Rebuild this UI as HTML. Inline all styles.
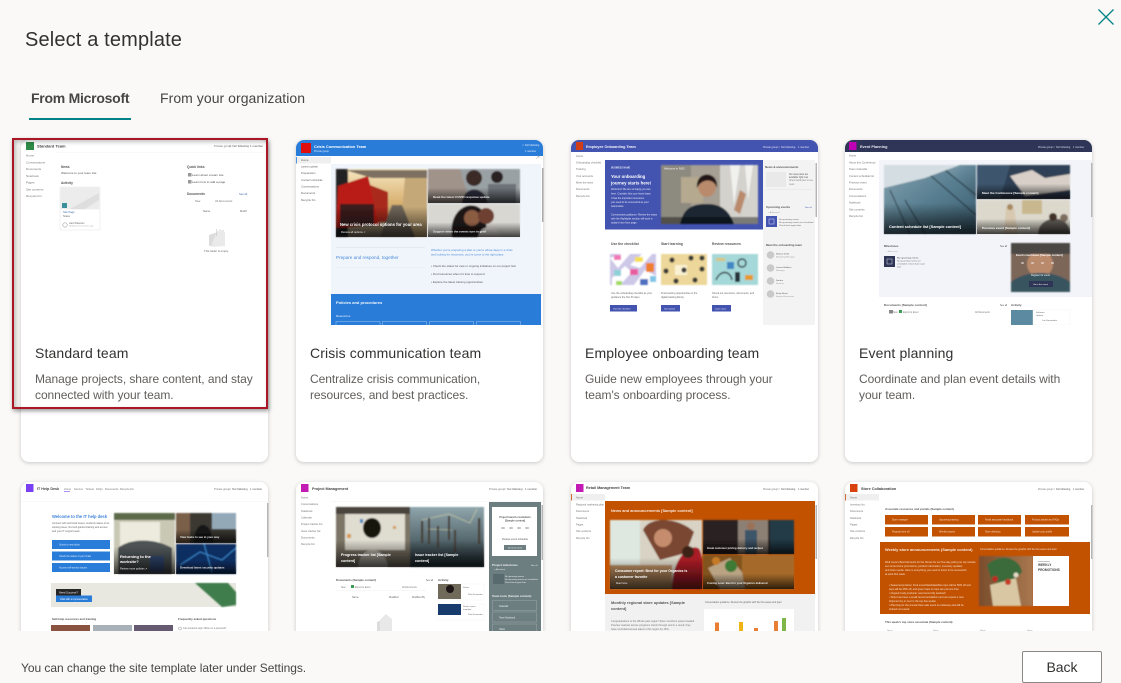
<!DOCTYPE html>
<html><head><meta charset="utf-8"><title>Select a template</title>
<style>
html,body{margin:0;padding:0;width:1121px;height:683px;overflow:hidden;background:#faf9f8;font-family:"Liberation Sans",sans-serif}
.a{position:absolute;white-space:nowrap}
.card{position:absolute;width:247px;background:#fff;border-radius:8px;box-shadow:0 1px 4px rgba(0,0,0,.2)}
.t{position:absolute;font-size:14px;color:#323130;letter-spacing:.13px;white-space:nowrap}
.d{position:absolute;font-size:12px;line-height:16px;color:#605e5c;letter-spacing:-.06px;white-space:nowrap}
svg text{font-family:"Liberation Sans",sans-serif}
</style></head>
<body>
<div class="a" style="left:25px;top:28px;font-size:20px;line-height:24px;color:#323130;letter-spacing:.15px">Select a template</div>
<div class="a" style="left:31px;top:90px;font-size:14px;line-height:17px;font-weight:bold;color:#484644;letter-spacing:-.26px">From Microsoft</div>
<div class="a" style="left:160px;top:90px;font-size:14px;line-height:17px;color:#484644;letter-spacing:.05px">From your organization</div>
<div class="a" style="left:29px;top:118px;width:102px;height:2px;background:#038387"></div>
<svg class="a" style="left:1097px;top:8px" width="18" height="18" viewBox="0 0 18 18"><path d="M1.5 1.5L16.500 16.500M16.500 1.500L1.500 16.500" stroke="#038387" stroke-width="1.3" fill="none"/></svg>

<div class="card" style="left:21px;top:140px;height:322px"></div>
<div class="card" style="left:296px;top:140px;height:322px"></div>
<div class="card" style="left:571px;top:140px;height:322px"></div>
<div class="card" style="left:845px;top:140px;height:322px"></div>
<div class="card" style="left:21px;top:482px;height:200px"></div>
<div class="card" style="left:296px;top:482px;height:200px"></div>
<div class="card" style="left:571px;top:482px;height:200px"></div>
<div class="card" style="left:845px;top:482px;height:200px"></div>

<svg class="a" style="left:0;top:0" width="1121" height="683" viewBox="0 0 1121 683">
<defs>
<linearGradient id="ov" x1="0" y1="0" x2="0" y2="1"><stop offset=".55" stop-color="#000" stop-opacity="0"/><stop offset="1" stop-color="#000" stop-opacity=".72"/></linearGradient>
<linearGradient id="sun" x1="0" y1="0" x2="0" y2="1"><stop offset="0" stop-color="#f6e6c0"/><stop offset=".5" stop-color="#d8b070"/><stop offset="1" stop-color="#8a8070"/></linearGradient>
<linearGradient id="bld" x1="0" y1="0" x2="1" y2="1"><stop offset="0" stop-color="#c6d3da"/><stop offset=".5" stop-color="#5f8496"/><stop offset="1" stop-color="#1d3442"/></linearGradient>
<linearGradient id="pier" x1="0" y1="0" x2="0" y2="1"><stop offset="0" stop-color="#8fa6ac"/><stop offset="1" stop-color="#27363d"/></linearGradient>
<linearGradient id="wood" x1="0" y1="0" x2="1" y2="0"><stop offset="0" stop-color="#7a4d2c"/><stop offset="1" stop-color="#a87750"/></linearGradient>
<filter id="b" x="-5%" y="-5%" width="110%" height="110%"><feGaussianBlur stdDeviation=".9"/></filter>
<filter id="s" x="-5%" y="-5%" width="110%" height="110%"><feGaussianBlur stdDeviation=".33"/></filter>
</defs>

<g filter="url(#s)">
<!-- T1 Standard -->
<rect x="26" y="142" width="8" height="8" fill="#2f8a45"/>
<text x="37" y="147.500" font-size="4" font-weight="bold" fill="#444">Standard Team</text>
<text x="214" y="147" font-size="2.900" fill="#777">Private group</text><text x="229" y="147" font-size="2.900" fill="#555">☆ Not following</text><text x="250" y="147" font-size="2.900" fill="#555">1 member</text>
<rect x="56" y="152" width="209" height=".5" fill="#f0f0f0"/>
<g font-size="3" fill="#777"><text x="26" y="156.500">Home</text><text x="26" y="163.500">Conversations</text><text x="26" y="170">Documents</text><text x="26" y="177">Notebook</text><text x="26" y="183.500">Pages</text><text x="26" y="190.500">Site contents</text><text x="26" y="197">Recycle bin</text></g>
<g fill="#555"><text x="61" y="168" font-size="3.300" font-weight="bold">News</text><text x="61" y="174" font-size="3">Welcome to your team site</text><text x="61" y="184" font-size="3.300" font-weight="bold">Activity</text>
<text x="187" y="168" font-size="3.300" font-weight="bold">Quick links</text><text x="192" y="176" font-size="3">Learn about a team site</text><text x="192" y="183" font-size="3">Learn how to add a page</text><text x="187" y="195" font-size="3.300" font-weight="bold">Documents</text></g>
<rect x="188" y="173" width="3.500" height="3.500" fill="#999"/><rect x="188" y="180" width="3.500" height="3.500" fill="#999"/>
<text x="239" y="195" font-size="2.700" fill="#4472a8">See all</text>
<text x="195" y="202" font-size="2.700" fill="#777">New</text><text x="215" y="202" font-size="2.700" fill="#777">All Documents</text><text x="203" y="212" font-size="2.700" fill="#666">Name</text><text x="240" y="212" font-size="2.700" fill="#666">Modif</text>
<rect x="60" y="187" width="40" height="43" fill="#fff" stroke="#eaeaea" stroke-width=".6"/><rect x="60.500" y="187.500" width="39" height="22" fill="#ececec"/><path d="M70 209L99 193V200L85 209Z" fill="#dedede"/><rect x="62" y="203" width="5" height="5" fill="#3d8f9a"/>
<text x="63" y="213" font-size="2.700" fill="#4472a8">Site Page</text><text x="63" y="217" font-size="2.700" fill="#666">Notes</text><circle cx="65" cy="225" r="2.200" fill="none" stroke="#888" stroke-width=".5"/><text x="69" y="224" font-size="2.300" fill="#666">Liam Patterson</text><text x="69" y="226.500" font-size="2" fill="#aaa">Modified a few minutes ago</text>
<path d="M209 235L224 230V245L209 246Z" fill="#dcdcdc"/><path d="M216 233L220 229L225 232V246L211 247Z" fill="#eaeaea"/><rect x="216.500" y="229" width=".5" height="7" fill="#bbb"/>
<text x="204" y="252" font-size="2.800" fill="#666">This folder is empty</text>

<!-- T2 Crisis -->
<path d="M296 148a8 8 0 0 1 8-8H535a8 8 0 0 1 8 8V156H296Z" fill="#2b7cd9"/>
<rect x="301" y="143" width="10" height="10" fill="#e01010"/>
<text x="314" y="148" font-size="3.900" font-weight="bold" fill="#fff">Crisis Communication Team</text><text x="314" y="152" font-size="2.500" fill="#dce9fa">Private group</text>
<text x="522" y="146" font-size="2.500" fill="#e5effb">☆ Not following</text><text x="525" y="152" font-size="2.500" fill="#e5effb">1 member</text>
<rect x="296" y="157" width="35" height="6.500" fill="#efefef"/><rect x="296" y="157" width=".8" height="6.500" fill="#2b7cd9"/>
<g font-size="2.800" fill="#666"><text x="301" y="161">Home</text><text x="301" y="167.500">Latest update</text><text x="301" y="174">Preparation</text><text x="301" y="181">Contact schedule</text><text x="301" y="187.500">Conversations</text><text x="301" y="194">Documents</text><text x="301" y="201">Recycle bin</text></g>
<rect x="331" y="164" width="210" height="131" fill="#f0f5fc"/>
<rect x="542" y="168" width="1.500" height="54" fill="#aaa"/>
<path d="M536 159L539 156M537 156H539V158" stroke="#888" stroke-width=".4" fill="none"/>
<g filter="url(#b)">
<rect x="336" y="169" width="91" height="68" fill="url(#sun)"/>
<rect x="336" y="169" width="12" height="68" fill="#222"/>
<path d="M338 186L368 176L380 225L336 228Z" fill="#b91f17"/><path d="M370 185L388 192L388 222L378 222Z" fill="#a92b1a"/>
<rect x="340" y="204" width="34" height="22" fill="#1f1f1f" opacity=".8"/>
<path d="M345 170H427V178H372Z" fill="#7e7060"/><path d="M405 178H427V237H400Z" fill="#c4a878"/><path d="M380 237L392 205H402L415 237Z" fill="#70665a"/>
<rect x="428" y="169" width="92" height="34" fill="#9aa1a4"/><path d="M428 169H460L470 203H428Z" fill="#a0938a"/><circle cx="474" cy="178" r="8" fill="#3b2a26"/><path d="M462 203C464 185 484 185 488 203Z" fill="#2d2f3c"/><circle cx="497" cy="177" r="6" fill="#2b2220"/><rect x="488" y="184" width="28" height="19" fill="#6c7278"/>
<rect x="428" y="204" width="92" height="33" fill="#d9d7d2"/><path d="M452 237C448 210 470 198 482 210C488 216 486 237 486 237Z" fill="#1e1715"/><circle cx="472" cy="218" r="8" fill="#8a5b43"/><circle cx="486" cy="216" r="8" fill="#6d4030"/><path d="M478 237C480 224 496 224 502 237Z" fill="#e4dedc"/>
</g>
<rect x="336" y="169" width="91" height="68" fill="url(#ov)"/><rect x="428" y="169" width="92" height="34" fill="url(#ov)"/><rect x="428" y="204" width="92" height="33" fill="url(#ov)"/>
<text x="340" y="226" font-size="4.200" font-weight="bold" fill="#fff">New crisis protocol options for your area</text><text x="341" y="233" font-size="2.700" fill="#eee">Review all options ↗</text>
<text x="433" y="198" font-size="3" font-weight="bold" fill="#eee">Read the latest COVID response update</text><text x="433" y="232.500" font-size="3" font-weight="bold" fill="#eee">Support when the events turn in grief</text>
<rect x="336" y="247" width="89" height=".6" fill="#dde3ea"/><rect x="336" y="267" width="89" height=".6" fill="#e8edf3"/>
<text x="336" y="259" font-size="4.600" fill="#4a8ad8">Prepare and respond, together</text>
<g font-size="2.900" fill="#4a8ad8"><text x="431" y="251">Whether you're preparing a plan or you're elbow deep in a crisis</text><text x="431" y="255.500">and looking for resources, you've come to the right place.</text></g>
<g font-size="2.900" fill="#555"><text x="431" y="267">•  Check the status for new or ongoing initiatives on our project hub</text><text x="431" y="275">•  Find resources when it's time to respond</text><text x="431" y="283">•  Explore the latest training opportunities</text></g>
<rect x="331" y="294" width="210" height="31" fill="#2b7cd9"/>
<text x="336" y="304" font-size="4" font-weight="bold" fill="#f2f7fd">Policies and procedures</text><text x="336" y="317" font-size="3" fill="#eaf2fc">Resources</text>
<g fill="none" stroke="#9cc3ef" stroke-width=".5"><rect x="336" y="321.500" width="44" height="6"/><rect x="382.500" y="321.500" width="44" height="6"/><rect x="429.500" y="321.500" width="44" height="6"/><rect x="476.500" y="321.500" width="44" height="6"/></g>
<rect x="296" y="325" width="247" height="5" fill="#fff"/>

<!-- T3 Onboarding -->
<path d="M571 148a8 8 0 0 1 8-8H810a8 8 0 0 1 8 8V152H571Z" fill="#4353b0"/>
<rect x="576" y="142" width="7" height="8" fill="#d03e14"/>
<text x="586" y="148" font-size="3.700" font-weight="bold" fill="#f3f3fb">Employee Onboarding Team</text>
<text x="763" y="148" font-size="2.500" fill="#dfe2f4">Private group</text><text x="778" y="148" font-size="2.500" fill="#dfe2f4">☆ Not following</text><text x="798" y="148" font-size="2.500" fill="#dfe2f4">1 member</text>
<g font-size="2.700" fill="#777"><text x="576" y="157">Home</text><text x="576" y="163.500">Onboarding checklist</text><text x="576" y="170">Training</text><text x="576" y="177">Your accounts</text><text x="576" y="183.500">Meet the team</text><text x="576" y="190">Documents</text><text x="576" y="197">Recycle bin</text></g>
<rect x="605" y="153" width="211" height="7" fill="#fff"/>
<rect x="605" y="160" width="158" height="69.500" fill="#4353b0"/>
<rect x="763" y="160" width="52" height="165" fill="#f3f3f3"/>
<rect x="815.500" y="163" width="1.500" height="54" fill="#b5b5b5"/>
<text x="611" y="168.500" font-size="2.300" font-weight="bold" fill="#e5e7f5">BUSINESS NAME</text>
<text x="611" y="178" font-size="4.300" font-weight="bold" fill="#fff">Your onboarding</text><text x="611" y="184.500" font-size="4.300" font-weight="bold" fill="#fff">journey starts here!</text>
<g font-size="2.500" fill="#e6e8f7"><text x="611" y="190">Welcome! We are so happy you are</text><text x="611" y="194.500">here. Consider this your home base.</text><text x="611" y="199">It has the important resources</text><text x="611" y="203">you need to be successful as your</text><text x="611" y="207">teammates.</text><text x="611" y="215.500">Conversation guidance: Review the steps</text><text x="611" y="219.500">with the Highlights section will work in</text><text x="611" y="223.500">today's Intro from page.</text></g>
<g filter="url(#b)">
<rect x="661" y="165" width="97" height="59" fill="#a69f93"/><rect x="661" y="165" width="30" height="59" fill="#8d8a80"/><rect x="720" y="165" width="38" height="59" fill="#d3d2cc"/><path d="M730 165L734 205L740 165ZM745 165L748 200L753 165Z" fill="#f1f1ee"/>
<rect x="681" y="177" width="22" height="26" fill="#b5a98f"/>
<path d="M680 224C684 206 694 204 708 204C722 204 730 212 734 224Z" fill="#1c2733"/>
<ellipse cx="707" cy="186" rx="9" ry="11" fill="#b98a6c"/><path d="M697 188C695 170 719 170 717 188C714 178 702 178 697 188Z" fill="#241712"/>
<path d="M734 210L740 190L746 194L740 214Z" fill="#b98a6c"/>
<rect x="661" y="217" width="97" height="7" fill="#000" opacity=".42"/>
</g>
<text x="664" y="169.500" font-size="2.700" fill="#f5f5f5">Welcome to R&amp;D</text>
<text x="765" y="168" font-size="2.900" font-weight="bold" fill="#555">News &amp; announcements</text>
<rect x="766" y="172" width="20" height="15" fill="#e9e9e9"/>
<g font-size="2.300" fill="#555"><text x="789" y="175">No news posts are</text><text x="789" y="178">available right now</text><text x="789" y="181" fill="#888">Check back later to see</text><text x="789" y="185" fill="#888">news</text></g>
<rect x="766" y="189.500" width="46" height=".5" fill="#e2e2e2"/>
<text x="766" y="208" font-size="2.900" font-weight="bold" fill="#555">Upcoming events</text><text x="805" y="208" font-size="2.200" fill="#4353b0">See all</text><text x="768" y="213" font-size="2.200" fill="#999">+ Add event</text>
<rect x="766" y="216" width="11" height="11" fill="#4353b0"/><rect x="769" y="219" width="5" height="5" fill="none" stroke="#dfe2f4" stroke-width=".5"/>
<g font-size="2.200" fill="#666"><text x="779" y="220">No upcoming events</text><text x="779" y="223">No upcoming events are scheduled</text><text x="779" y="226">Check back again later</text></g>
<text x="766" y="246" font-size="2.900" font-weight="bold" fill="#555">Meet the onboarding team</text>
<g fill="#c9c9c9"><circle cx="770.500" cy="255" r="3.800"/><circle cx="770.500" cy="268" r="3.800"/><circle cx="770.500" cy="281" r="3.800"/><circle cx="770.500" cy="294" r="3.800"/></g>
<g font-size="2.200" fill="#555"><text x="776" y="254.500">Nathan Smith</text><text x="776" y="257.500" fill="#999">Marketing Manager</text><text x="776" y="268">Lauren Robbins</text><text x="776" y="271" fill="#999">Manager</text><text x="776" y="281">Sandra</text><text x="776" y="284" fill="#999">Director</text><text x="776" y="294">Emily Braun</text><text x="776" y="297" fill="#999">Human Resources</text></g>
<g font-size="3.400" font-weight="bold" fill="#555"><text x="611" y="245">Use the checklist</text><text x="661" y="245">Start learning</text><text x="712" y="245">Review resources</text></g>
<g filter="url(#b)">
<rect x="610" y="254" width="46" height="31" fill="#cdc7e8"/>
<path d="M610 258L622 254H630L618 268ZM630 265L642 254H652L640 268ZM612 278L625 266L632 272L620 285H612ZM634 285L645 270L656 276V285Z" fill="#fff"/>
<rect x="614" y="255" width="7" height="5" fill="#f078b8"/><rect x="635" y="257" width="8" height="5" fill="#f6df52"/><rect x="646" y="263" width="8" height="9" fill="#ef7e2f"/><rect x="630" y="269" width="8" height="6" fill="#e85da0"/><rect x="640" y="279" width="8" height="6" fill="#4d6fc0"/><rect x="614" y="270" width="7" height="6" fill="#8dd0d7"/><rect x="616" y="281" width="6" height="4" fill="#a3d962"/><rect x="650" y="276" width="6" height="6" fill="#7ec4e8"/>
<rect x="661" y="254" width="46" height="31" fill="#edd79a"/><rect x="675" y="265" width="12" height="10" fill="#fbf2d6"/>
<g fill="#3a3a38"><circle cx="672" cy="260" r="2.600"/><circle cx="691" cy="258" r="2.600"/><circle cx="702" cy="258" r="2.600"/><circle cx="666" cy="271" r="2.600"/><circle cx="684" cy="270" r="2.600"/><circle cx="702" cy="269" r="2.600"/><circle cx="676" cy="281" r="2.600"/><circle cx="695" cy="280" r="2.600"/></g>
<rect x="712" y="254" width="46" height="31" fill="#a5d8d8"/>
<g fill="none" stroke="#273038" stroke-width="1.400"><path d="M716 280C720 270 730 270 732 280"/><circle cx="742" cy="263" r="4"/></g><rect x="727" y="262" width="7" height="7" fill="#3f87c4"/><rect x="716" y="258" width="9" height="3" fill="#d7c57a"/><rect x="745" y="275" width="8" height="5" fill="#e79a2b"/><rect x="735" y="272" width="5" height="10" fill="#273038"/>
</g>
<g font-size="2.500" fill="#666"><text x="611" y="294">Use the onboarding checklist as your</text><text x="611" y="298">guidance the first 30 days.</text><text x="661" y="294">Find learning opportunities in the</text><text x="661" y="298">digital training library.</text><text x="712" y="294">Check out resources, documents, and</text><text x="712" y="298">forms.</text></g>
<rect x="610" y="305" width="27" height="6.500" fill="#4353b0"/><rect x="661" y="305" width="19" height="6.500" fill="#4353b0"/><rect x="712" y="305" width="19" height="6.500" fill="#4353b0"/>
<g font-size="2.200" fill="#fff"><text x="613" y="309.300">View the checklist</text><text x="664" y="309.300">Get started</text><text x="715" y="309.300">Learn more</text></g>

<!-- T4 Event -->
<path d="M845 148a8 8 0 0 1 8-8H1084a8 8 0 0 1 8 8V152H845Z" fill="#2f3456"/>
<rect x="849" y="142" width="7.500" height="8" fill="#c000b5"/>
<text x="860" y="148" font-size="3.800" font-weight="bold" fill="#e9eaf2">Event Planning</text>
<text x="1038" y="148" font-size="2.500" fill="#d8daea">Private group</text><text x="1053" y="148" font-size="2.500" fill="#d8daea">☆ Not following</text><text x="1073" y="148" font-size="2.500" fill="#d8daea">1 member</text>
<g font-size="2.700" fill="#777"><text x="849" y="156.500">Home</text><text x="849" y="163.500">About this Conference</text><text x="849" y="170">Team Calendar</text><text x="849" y="177">Content schedule list</text><text x="849" y="183.500">Previous event</text><text x="849" y="190">Documents</text><text x="849" y="197">Conversations</text><text x="849" y="203.500">Notebook</text><text x="849" y="210.500">Site contents</text><text x="849" y="217">Recycle bin</text></g>
<rect x="879" y="160" width="213" height="137" fill="#f2f4f9"/>
<rect x="1091" y="163" width="1.500" height="54" fill="#b5b5b5"/>
<g filter="url(#b)">
<rect x="884" y="165" width="92" height="69" fill="url(#bld)"/><path d="M884 180C905 170 930 168 943 165L976 200V234H884Z" fill="#527a8c" opacity=".55"/><path d="M930 175L976 215M945 170L976 195M905 200L925 234M890 190L910 234" stroke="#1a2730" stroke-width=".9" fill="none"/><path d="M884 165H960L925 178L884 188Z" fill="#d3dde2"/>
<rect x="977" y="165" width="93" height="34" fill="#2e4155"/><path d="M1010 176L1032 170L1045 178L1070 174V190L1025 196Z" fill="#d7cfc8"/><path d="M977 165H1010L1000 199H977Z" fill="#3d566e"/>
<rect x="977" y="200" width="93" height="34" fill="#dcd8cc"/><path d="M1004 234L1006 208H1014L1018 234Z" fill="#d8c8b0"/><circle cx="1010" cy="207" r="3" fill="#a88a62"/><path d="M1038 234C1038 215 1070 212 1070 234Z" fill="#5f5a55"/><circle cx="1053" cy="217" r="4" fill="#3f3228"/><circle cx="1064" cy="218" r="4" fill="#7d6d5f"/><rect x="1022" y="200" width="20" height="14" fill="#c9b88f"/>
<rect x="1011" y="243" width="59" height="49" fill="#7c6658"/><circle cx="1040" cy="264" r="13" fill="#b98a6c"/><path d="M1011 243H1070V254H1011Z" fill="#4c4744"/><path d="M1011 282C1025 270 1055 270 1070 282V292H1011Z" fill="#39545f"/>
</g>
<rect x="884" y="165" width="92" height="69" fill="url(#ov)"/><rect x="977" y="165" width="93" height="34" fill="url(#ov)"/><rect x="977" y="200" width="93" height="34" fill="url(#ov)"/>
<text x="889" y="228" font-size="3.900" font-weight="bold" fill="#fff">Content schedule list [Sample content]</text>
<text x="982" y="194" font-size="3.100" font-weight="bold" fill="#fff">Meet the Conference [Sample content]</text>
<text x="982" y="229" font-size="3.100" font-weight="bold" fill="#fff">Previous event [Sample content]</text>
<text x="884" y="247" font-size="2.800" font-weight="bold" fill="#555">Milestones</text><text x="1000" y="247" font-size="2.300" fill="#555">See all</text><text x="886" y="252" font-size="2.200" fill="#aaa">+ Add event</text>
<rect x="884" y="256" width="11" height="11" fill="#2f3456"/><rect x="887" y="259" width="5" height="5" fill="none" stroke="#e0e2ee" stroke-width=".5"/>
<g font-size="2.200" fill="#666"><text x="897" y="258.500" font-weight="bold">No upcoming events</text><text x="897" y="261.500">No upcoming events are</text><text x="897" y="264.500">scheduled. Check back soon</text><text x="897" y="267.500">later</text></g>
<g font-size="2.800" fill="#fff"><text x="1016" y="256" font-weight="bold">Event countdown [Sample content]</text><text x="1021" y="264">00</text><text x="1031" y="264">00</text><text x="1041" y="264">00</text><text x="1051" y="264">00</text><text x="1031" y="276" font-size="2.400">Register for event</text></g>
<rect x="1029" y="281" width="24" height="6" fill="#2f3456"/><text x="1033" y="285" font-size="2.200" fill="#fff">Go to the event</text>
<text x="884" y="306" font-size="3.100" font-weight="bold" fill="#555">Documents [Sample content]</text><text x="1000" y="306" font-size="2.300" fill="#555">See all</text><text x="1011" y="306" font-size="2.900" font-weight="bold" fill="#555">Activity</text>
<rect x="889" y="310" width="4" height="3.500" fill="#888"/><text x="893" y="313" font-size="2.300" fill="#777">New</text><rect x="899" y="310" width="3" height="3" fill="#3c9c52"/><text x="903" y="313" font-size="2.300" fill="#777">Export to Excel</text><text x="975" y="313" font-size="2.300" fill="#777">All Documents</text>
<rect x="1011" y="310" width="22" height="15" fill="#5b8aa0"/><rect x="1033" y="310" width="37" height="15" fill="#fff" stroke="#eee" stroke-width=".4"/>
<text x="1036" y="313" font-size="2.200" fill="#666">Software</text><text x="1036" y="316" font-size="2.200" fill="#666">Update</text><text x="1042" y="321" font-size="2.200" fill="#666">Lori Hernandez</text>
<rect x="845" y="325" width="247" height="6" fill="#fff"/>

<!-- R2 IT help desk -->
<rect x="26" y="484" width="7.500" height="8" fill="#7a3ff2"/>
<text x="37" y="490" font-size="3.700" font-weight="bold" fill="#444">IT Help Desk</text>
<g font-size="2.700" fill="#777"><text x="64" y="490">Home</text><text x="74" y="490">Service</text><text x="85.500" y="490">Tickets</text><text x="96" y="490">FAQs</text><text x="105" y="490">Documents</text><text x="120" y="490">Recycle bin</text><text x="214" y="490">Private group</text><text x="229" y="490" fill="#555">☆ Not following</text><text x="250" y="490" fill="#555">1 member</text></g>
<rect x="64" y="491" width="6" height=".6" fill="#7a3ff2"/>
<rect x="21" y="501" width="247" height=".5" fill="#f2f2f2"/>
<rect x="267" y="503" width="1.500" height="54" fill="#b5b5b5"/>
<text x="52" y="518" font-size="4.100" font-weight="bold" fill="#3f83d9">Welcome to the IT help desk</text>
<g font-size="2.500" fill="#666"><text x="52" y="524">Connect with technical issues, students status of an</text><text x="52" y="528">existing issue, find self-guided training and access</text><text x="52" y="532">and your IT support team.</text></g>
<g fill="#2b7cd9"><rect x="52" y="540" width="58" height="9"/><rect x="52" y="551.500" width="58" height="9"/><rect x="52" y="563" width="58" height="9"/></g>
<g font-size="2.400" fill="#d9e8fa"><text x="59" y="545.500">Submit a new ticket</text><text x="59" y="557">Check the status of your ticket</text><text x="59" y="568.500">Access self-service issues</text></g>
<g filter="url(#b)">
<rect x="114" y="513" width="61" height="61" fill="#c9c8b5"/><rect x="114" y="513" width="61" height="7" fill="#5d6a4a"/><rect x="120" y="522" width="40" height="24" fill="#ecebdd"/><path d="M118 548C130 538 155 538 172 548V574H118Z" fill="#4d5254"/><rect x="150" y="556" width="14" height="16" fill="#364e7a"/>
<rect x="176" y="513" width="60" height="30" fill="#3b3733"/><rect x="176" y="513" width="14" height="30" fill="#7a5f4a"/><rect x="212" y="513" width="24" height="16" fill="#93a9b8"/><path d="M194 543C194 525 204 520 210 530L214 543Z" fill="#141414"/>
<rect x="176" y="544" width="60" height="30" fill="#0d2f61"/><path d="M180 565L200 552L222 560L236 548M204 544L212 572" stroke="#3e8fd8" stroke-width=".9" fill="none"/>
</g>
<rect x="114" y="513" width="61" height="61" fill="url(#ov)"/><rect x="176" y="513" width="60" height="30" fill="url(#ov)"/><rect x="176" y="544" width="60" height="30" fill="url(#ov)"/>
<text x="120" y="558" font-size="4" font-weight="bold" fill="#fff">Returning to the</text><text x="120" y="563" font-size="4" font-weight="bold" fill="#fff">worksite?</text><text x="120" y="569.500" font-size="2.600" fill="#eee">Review more policies ↗</text>
<text x="180" y="538" font-size="2.800" font-weight="bold" fill="#eee">View tasks to see in your way</text><text x="180" y="568.500" font-size="2.800" font-weight="bold" fill="#eee">Download latest security updates</text>
<rect x="51" y="583" width="185" height="24" fill="#e9e8e0"/><path d="M195 583H228L236 592V605L222 607Z" fill="#3f7d4d" filter="url(#b)"/>
<rect x="56" y="589" width="25" height="6.500" fill="#252525"/><text x="59" y="593.500" font-size="2.700" fill="#eee">Need Success?</text>
<rect x="56" y="595.500" width="36" height="6.500" fill="#2b7cd9"/><text x="60" y="600" font-size="2.400" fill="#fff">Chat with a representative</text>
<text x="52" y="620" font-size="2.900" font-weight="bold" fill="#555">Self-help resources and training</text><text x="178" y="620" font-size="2.900" font-weight="bold" fill="#555">Frequently asked questions</text>
<rect x="51" y="625" width="39" height="6" fill="#8a5240"/><rect x="93" y="625" width="39" height="6" fill="#a8b0b8"/><rect x="134" y="625" width="39" height="6" fill="#665a70"/>
<circle cx="180" cy="628.500" r="1.500" fill="none" stroke="#777" stroke-width=".4"/><text x="183" y="629" font-size="2.400" fill="#777">Can students login offsite on a personal?</text>

<!-- R2 Project -->
<rect x="301" y="484" width="7.500" height="8" fill="#c21bb5"/>
<text x="312" y="490" font-size="3.700" font-weight="bold" fill="#444">Project Management</text>
<g font-size="2.700" fill="#777"><text x="489" y="490">Private group</text><text x="504" y="490" fill="#555">☆ Not following</text><text x="525" y="490" fill="#555">1 member</text></g>
<g font-size="2.700" fill="#777"><text x="301" y="498.500">Home</text><text x="301" y="505">Conversations</text><text x="301" y="512">Notebook</text><text x="301" y="518.500">Calendar</text><text x="301" y="525">Project tracker list</text><text x="301" y="532">Issue tracker list</text><text x="301" y="538.500">Documents</text><text x="301" y="545">Recycle bin</text></g>
<rect x="331" y="501" width="212" height=".5" fill="#f0f0f0"/>
<g filter="url(#b)">
<rect x="336" y="507" width="74" height="60" fill="#7b7566"/><rect x="345" y="514" width="60" height="36" fill="#dfdcd0"/><rect x="336" y="507" width="74" height="7" fill="#4a443c"/><ellipse cx="372" cy="528" rx="9" ry="10" fill="#16130f"/><path d="M358 567C360 544 385 544 388 567Z" fill="#bcb6ab"/><rect x="360" y="519" width="3" height="4" fill="#3c86c0"/><rect x="347" y="534" width="4" height="4" fill="#d69a52"/><rect x="393" y="526" width="3" height="3" fill="#d69a52"/>
<rect x="410" y="507" width="74" height="60" fill="url(#pier)"/><path d="M422 520L449 514L470 523L477 509M427 529L452 530" stroke="#d4d1a8" stroke-width=".6" fill="none"/><g fill="#463d30"><rect x="421" y="521" width="2.200" height="22"/><rect x="428" y="518" width="2" height="26"/><rect x="448" y="516" width="2" height="24"/><rect x="437" y="526" width="2" height="22"/><rect x="454" y="530" width="2" height="22"/><rect x="478" y="518" width="2.200" height="26"/></g>
</g>
<rect x="336" y="507" width="74" height="60" fill="url(#ov)"/><rect x="410" y="507" width="74" height="60" fill="url(#ov)"/>
<g font-size="3.600" font-weight="bold" fill="#fff"><text x="341" y="556">Progress tracker list [Sample</text><text x="341" y="562">content]</text><text x="415" y="556">Issue tracker list [Sample</text><text x="415" y="562">content]</text></g>
<text x="336" y="581" font-size="2.900" font-weight="bold" fill="#555">Documents (Sample content)</text><text x="426" y="581" font-size="2.300" fill="#666">See all</text><text x="438" y="581" font-size="2.900" font-weight="bold" fill="#555">Activity</text>
<text x="341" y="588" font-size="2.300" fill="#777">New</text><rect x="351" y="585" width="3" height="3" fill="#3c9c52"/><text x="355" y="588" font-size="2.300" fill="#777">Export to Excel</text><text x="402" y="588" font-size="2.300" fill="#777">All Documents</text>
<rect x="336" y="590.500" width="90" height=".5" fill="#efefef"/>
<text x="352" y="598" font-size="2.500" fill="#666">Name</text><text x="389" y="598" font-size="2.500" fill="#666">Modified</text><text x="412" y="598" font-size="2.500" fill="#666">Modified By</text>
<path d="M377 622L389 617V631H377Z" fill="#dcdcdc"/><path d="M380 620L386 614L392 619V631H380Z" fill="#e8e8e8"/>
<rect x="438" y="584" width="46" height="16" fill="#fff" stroke="#eee" stroke-width=".4"/><rect x="438" y="584" width="23" height="15" fill="#6f6a5a"/><ellipse cx="450" cy="589" rx="4" ry="4" fill="#1e1915"/>
<text x="463" y="588" font-size="2.200" fill="#666">Status</text><text x="468" y="595" font-size="2.100" fill="#666">Patti Fernandez</text>
<rect x="438" y="604" width="46" height="16" fill="#fff" stroke="#eee" stroke-width=".4"/><rect x="438" y="604" width="23" height="11" fill="#133a6c"/>
<text x="463" y="607" font-size="2.200" fill="#666">Status report</text><text x="463" y="610" font-size="2.200" fill="#666">template</text><text x="468" y="615" font-size="2.100" fill="#666">Patti Fernandez</text>
<rect x="489" y="502" width="52" height="129" fill="#6d7e81"/><rect x="541.500" y="505" width="1.500" height="55" fill="#b5b5b5"/>
<rect x="492" y="507" width="45" height="49" fill="#fff"/>
<g font-size="2.500" fill="#555" text-anchor="middle"><text x="515" y="518" font-weight="bold">Project launch countdown</text><text x="515" y="521.500" font-weight="bold">[Sample content]</text><text x="503" y="529" font-size="3">00</text><text x="511" y="529" font-size="3">00</text><text x="519" y="529" font-size="3">00</text><text x="527" y="529" font-size="3">00</text><text x="515" y="540">Review event schedule</text></g>
<rect x="504" y="545" width="22" height="5" fill="#6d7e81"/><text x="515" y="548.500" font-size="2.100" fill="#fff" text-anchor="middle">Go to the event</text>
<g fill="#edf0f0"><text x="492" y="566" font-size="2.900" font-weight="bold">Project milestones</text><text x="531" y="566" font-size="2.100">See all</text><text x="494" y="570" font-size="2.100">+ Add event</text><text x="505" y="577" font-size="2.100">No upcoming events</text><text x="505" y="580" font-size="2.100">No upcoming events are scheduled</text><text x="505" y="583" font-size="2.100">Check back again later</text><text x="492" y="597" font-size="2.900" font-weight="bold">Team tools (Sample content)</text><text x="499" y="607" font-size="2.300">Calendar</text><text x="499" y="618.500" font-size="2.300">Team Notebook</text><text x="499" y="630" font-size="2.300">Tasks</text></g>
<rect x="493" y="574" width="11" height="10" fill="#596a6d"/>
<g fill="none" stroke="#9aa8aa" stroke-width=".5"><rect x="492.500" y="600.500" width="44" height="10"/><rect x="492.500" y="612" width="44" height="10"/><rect x="492.500" y="624" width="44" height="10"/></g>

<!-- R2 Retail -->
<rect x="576" y="484" width="7.500" height="8" fill="#c21bb5"/>
<text x="586" y="489" font-size="3.700" font-weight="bold" fill="#444">Retail Management Team</text>
<g font-size="2.500" fill="#777"><text x="763" y="490">Private group</text><text x="778" y="490" fill="#555">☆ Not following</text><text x="798" y="490" fill="#555">1 member</text></g>
<rect x="571" y="494" width="34" height="6.500" fill="#efefef"/><rect x="571" y="494" width=".8" height="6.500" fill="#c25100"/>
<g font-size="2.600" fill="#777"><text x="576" y="498.500">Home</text><text x="576" y="505.500">Regional marketing plan</text><text x="576" y="512">Documents</text><text x="576" y="519">Notebook</text><text x="576" y="525.500">Pages</text><text x="576" y="532">Site contents</text><text x="576" y="539">Recycle bin</text></g>
<rect x="605" y="501" width="210" height="93" fill="#c25100"/>
<rect x="815.500" y="505" width="1.500" height="54" fill="#b5b5b5"/>
<text x="611" y="512" font-size="3.900" font-weight="bold" fill="#fae8da">News and announcements [Sample content]</text>
<g filter="url(#b)">
<rect x="610" y="520" width="92" height="69" fill="#d8d3c4"/><rect x="610" y="520" width="30" height="45" fill="#dfe8e0"/><path d="M643 530C650 515 680 518 694 532L686 553L660 560Z" fill="#7a4632"/><circle cx="663" cy="538" r="9" fill="#c58d6d"/><path d="M672 589C672 560 688 544 698 548C705 552 702 589 702 589Z" fill="#a81c27"/><circle cx="688" cy="552" r="6" fill="#3e2318"/><rect x="610" y="565" width="62" height="24" fill="#b78b5e"/>
<rect x="703" y="520" width="91" height="34" fill="#2a2422"/><rect x="738" y="520" width="30" height="34" fill="#8c8074"/><circle cx="751" cy="526" r="4" fill="#9b7158"/><rect x="745" y="530" width="12" height="24" fill="#3e5568"/><rect x="770" y="520" width="24" height="34" fill="#223b46"/>
<rect x="703" y="555" width="91" height="34" fill="#82521f"/><rect x="742" y="555" width="52" height="34" fill="#a56a2a"/><path d="M720 589L708 568L730 558L742 572L745 589Z" fill="#b9a383"/><circle cx="731" cy="566" r="6" fill="#3e7a36"/><circle cx="716" cy="561" r="4" fill="#c67a25"/>
</g>
<rect x="610" y="520" width="92" height="69" fill="url(#ov)"/><rect x="703" y="520" width="91" height="34" fill="url(#ov)"/><rect x="703" y="555" width="91" height="34" fill="url(#ov)"/>
<text x="615" y="572" font-size="3.500" font-weight="bold" fill="#fff">Consumer report: Best for your Organics is</text><text x="615" y="578" font-size="3.500" font-weight="bold" fill="#fff">a customer favorite</text><text x="616" y="584" font-size="2.300" fill="#eee">Read more</text>
<text x="707" y="549" font-size="2.700" font-weight="bold" fill="#eee">Great customer pricing delivery and recipes</text><text x="707" y="584" font-size="2.700" font-weight="bold" fill="#eee">Coming soon: Best for your Organics delivered</text>
<rect x="605" y="594" width="210" height="37" fill="#f1f1f1"/>
<g font-size="3.900" font-weight="bold" fill="#555"><text x="611" y="604">Monthly regional store updates [Sample</text><text x="611" y="610">content]</text></g>
<text x="705" y="603" font-size="2.400" fill="#666">Conversation guidance: Review the graphic with the the leaves and past</text>
<g font-size="2.600" fill="#777"><text x="611" y="622">Congratulations to the Whole past region! Store members space headed</text><text x="611" y="626">Preview markets across programs check through and in a result, they</text><text x="611" y="630">have controlled annual sales in this region by 15%.</text></g>
<rect x="704" y="609" width="90" height="22" fill="#fff"/>
<rect x="715" y="622.500" width="4" height="9" fill="#e97e36"/><rect x="739" y="622" width="4" height="9" fill="#f0b412"/><rect x="754" y="628" width="4" height="3" fill="#e97e36"/><rect x="774" y="621" width="4" height="10" fill="#e97e36"/><rect x="782" y="618" width="4" height="13" fill="#7fb648"/>

<!-- R2 Store -->
<rect x="850" y="484" width="7.500" height="8" fill="#d8420f"/>
<text x="861" y="490" font-size="3.800" font-weight="bold" fill="#444">Store Collaboration</text>
<g font-size="2.500" fill="#777"><text x="1038" y="490">Private group</text><text x="1053" y="490" fill="#555">☆ Not following</text><text x="1073" y="490" fill="#555">1 member</text></g>
<rect x="845" y="494" width="34" height="6.500" fill="#efefef"/><rect x="845" y="494" width=".8" height="6.500" fill="#c25100"/>
<g font-size="2.600" fill="#777"><text x="850" y="498.500">Home</text><text x="850" y="505.500">Inventory list</text><text x="850" y="512">Documents</text><text x="850" y="519">Notebook</text><text x="850" y="525.500">Pages</text><text x="850" y="532">Site contents</text><text x="850" y="539">Recycle bin</text></g>
<text x="885" y="510" font-size="2.900" font-weight="bold" fill="#555">Associate resources and portals (Sample content)</text>
<g fill="#c25100"><rect x="885" y="515" width="43" height="9.500"/><rect x="932" y="515" width="43" height="9.500"/><rect x="978" y="515" width="43" height="9.500"/><rect x="1025" y="515" width="44" height="9.500"/><rect x="885" y="527" width="43" height="9.500"/><rect x="932" y="527" width="43" height="9.500"/><rect x="978" y="527" width="43" height="9.500"/><rect x="1025" y="527" width="44" height="9.500"/></g>
<g font-size="2.400" fill="#f6dcc8"><text x="892" y="520.500">Store manager</text><text x="939" y="520.500">Upcoming training</text><text x="985" y="520.500">Retail associate handbook</text><text x="1032" y="520.500">Product details and FAQs</text><text x="892" y="532.500">Request time off</text><text x="939" y="532.500">Weekly reports</text><text x="985" y="532.500">Store directory</text><text x="1032" y="532.500">Update your profile</text></g>
<rect x="880" y="542" width="210" height="72" fill="#c25100"/>
<rect x="1091" y="505" width="1.500" height="54" fill="#b5b5b5"/>
<text x="885" y="551" font-size="3.900" font-weight="bold" fill="#fbe7d8">Weekly store announcements (Sample content)</text>
<text x="980" y="550" font-size="2.400" fill="#f5dcc9">Conversation guidance: Review the graphic with the the leaves and past.</text>
<g font-size="2.600" fill="#f8e0ce"><text x="885" y="563">Well, Here's Best Moments for the Stores for our five-day policy per top include</text><text x="885" y="567">our current-time promotions, product information, inventory updates</text><text x="885" y="571">and store needs. Here is everything you need to know to be successful</text><text x="885" y="575">at work this week.</text><text x="889" y="586">•  Seasonal produce: Fruit smoothie/shake/blue tops will be 50% off and</text><text x="889" y="590">   tops will be 25% off, and green tops on tops are just one free</text><text x="889" y="594">•  Organic body products: new items fully stocked!</text><text x="889" y="598">•  Store has been a small recommendations and we expect a new</text><text x="889" y="602">   shipment by or next in the top few weeks</text><text x="889" y="606">•  Planning for the annual clear sale event is underway and will be</text><text x="889" y="610">   shared next week</text></g>
<g filter="url(#b)"><rect x="979" y="556" width="54" height="50" fill="url(#wood)"/><path d="M987 565C1000 552 1020 558 1022 572L1010 585L992 582Z" fill="#3b6a3b"/><path d="M993 606L990 585L1016 578L1021 606Z" fill="#d9c7a3"/><circle cx="995" cy="579" r="3" fill="#bb2a24"/><circle cx="1008" cy="582" r="3" fill="#c63a28"/><circle cx="1016" cy="575" r="2.500" fill="#e3dbc8"/></g>
<rect x="1033" y="556" width="36" height="50" fill="#fff"/>
<rect x="1038" y="561" width="12" height=".5" fill="#888"/><text x="1038" y="566" font-size="3.200" font-weight="bold" fill="#444">WEEKLY</text><text x="1038" y="571" font-size="3.200" font-weight="bold" fill="#444">PROMOTIONS</text>
<text x="885" y="623" font-size="2.900" font-weight="bold" fill="#555">This week's top store associate (Sample content)</text>
<g font-size="2.100" fill="#999"><text x="887" y="631">Name</text><text x="933" y="631">Name</text><text x="980" y="631">Name</text><text x="1027" y="631">Name</text></g>
</g>
</svg>

<div class="t" style="left:35px;top:345px;line-height:17px">Standard team</div>
<div class="d" style="left:35px;top:371px">Manage projects, share content, and stay<br>connected with your team.</div>
<div class="t" style="left:310px;top:345px;line-height:17px">Crisis communication team</div>
<div class="d" style="left:310px;top:371px">Centralize crisis communication,<br>resources, and best practices.</div>
<div class="t" style="left:585px;top:345px;line-height:17px">Employee onboarding team</div>
<div class="d" style="left:585px;top:371px">Guide new employees through your<br>team's onboarding process.</div>
<div class="t" style="left:859px;top:345px;line-height:17px">Event planning</div>
<div class="d" style="left:859px;top:371px">Coordinate and plan event details with<br>your team.</div>

<div class="a" style="left:12px;top:138px;width:252px;height:267px;border:2px solid #ab1626;box-shadow:1px 2px 4px rgba(0,0,0,.4),inset 2px 2px 4px rgba(0,0,0,.25)"></div>

<div class="a" style="left:0;top:631px;width:1121px;height:52px;background:#faf9f8"></div>
<div class="a" style="left:21px;top:660px;font-size:12px;line-height:16px;color:#484644;letter-spacing:-.05px">You can change the site template later under Settings.</div>
<div class="a" style="left:1022px;top:651px;width:78px;height:30px;background:#fff;border:1px solid #8a8886;border-radius:2px;text-align:center;font-size:14px;line-height:30px;color:#323130">Back</div>
</body></html>
